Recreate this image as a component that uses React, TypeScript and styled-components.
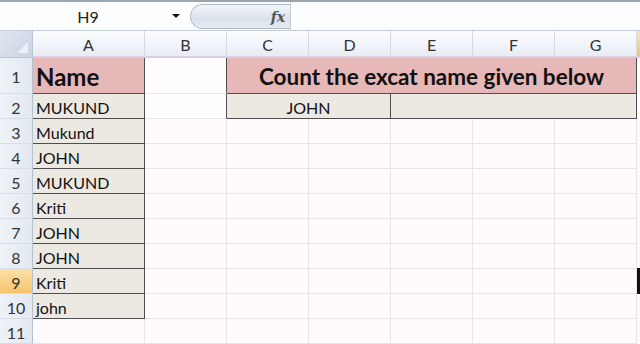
import * as React from 'react';
import styled, { createGlobalStyle, css } from 'styled-components';

const GlobalStyle = createGlobalStyle`
  html, body {
    margin: 0;
    padding: 0;
    background: #fffbfd;
    overflow: hidden;
  }
  body {
    font-family: Lato, "Open Sans", "Liberation Sans", sans-serif;
  }
`;

const Page = styled.div`
  width: 640px;
  height: 344px;
  display: flex;
  flex-direction: column;
  overflow: hidden;
`;

const FormulaBar = styled.div`
  height: 28px;
  display: flex;
  align-items: stretch;
  border-top: 2px solid #9ba5b0;
  border-bottom: 1px solid #c4ccd6;
  background: #fdfeff;
`;

const NameBox = styled.div`
  width: 188px;
  display: flex;
  align-items: center;
  font-size: 16px;
  color: #222;
  span {
    flex: 1;
    text-align: center;
    padding-left: 4px;
  }
`;

const DropArrow = styled.div`
  width: 0;
  height: 0;
  margin-right: 8px;
  border-left: 4px solid transparent;
  border-right: 4px solid transparent;
  border-top: 4px solid #111;
`;

const FxPill = styled.div`
  width: 94px;
  margin: 2px 0 1px 2px;
  border: 1px solid #aeb9c7;
  border-right: none;
  border-radius: 14px 0 0 14px;
  background: linear-gradient(#f3f6fa, #dbe2ec 60%, #e6ebf2);
  display: flex;
  align-items: center;
  justify-content: flex-end;
  padding-right: 5px;
  font-family: "DejaVu Serif", "Liberation Serif", serif;
  font-style: italic;
  font-weight: bold;
  font-size: 14px;
  color: #555;
`;

const FormulaInput = styled.div`
  flex: 1;
  border-left: 1px solid #c4ccd6;
  background: #fcfdff;
`;

const Sheet = styled.div`
  flex: 1;
  display: grid;
  grid-template-columns: 33px 112px repeat(6, 82px) 3px;
  grid-template-rows: 27px 36px repeat(10, 25px);
`;

const Corner = styled.div`
  background: linear-gradient(135deg, #dfe6ef, #c9d5e3);
  border-right: 1px solid #b6c4d4;
  border-bottom: 1px solid #b6c4d4;
  position: relative;
  &::after {
    content: '';
    position: absolute;
    right: 4px;
    bottom: 4px;
    width: 0;
    height: 0;
    border-left: 11px solid transparent;
    border-bottom: 11px solid #edf1f6;
  }
`;

const ColHead = styled.div<{ $sel?: boolean }>`
  background: linear-gradient(#fbfcfe, #f1f4f9 55%, #e7ebf3);
  border-right: 1px solid #d3dae4;
  border-bottom: 2px solid #dccfe0;
  display: flex;
  align-items: center;
  justify-content: center;
  padding-top: 2px;
  font-size: 16px;
  color: #333;
  ${p => p.$sel && css`
    background: linear-gradient(#fbe5b4, #f3c46a);
    border-right: none;
  `}
`;

const RowHead = styled.div<{ $sel?: boolean }>`
  background: linear-gradient(90deg, #eef2f7, #e3e9f1);
  border-right: 1px solid #b3c2d3;
  border-bottom: 1px solid #d6dde6;
  display: flex;
  align-items: center;
  justify-content: center;
  padding-top: 2px;
  font-size: 16px;
  color: #333;
  ${p => p.$sel && css`
    background: linear-gradient(#fbe0a6, #f5c56c);
  `}
`;

type CellProps = {
  $bg?: string;
  $boxed?: boolean;
  $darkRight?: boolean;
  $span?: number;
  $center?: boolean;
  $size?: number;
};

const Cell = styled.div<CellProps>`
  grid-column: span ${p => p.$span || 1};
  background: ${p => p.$bg || '#fffbfd'};
  border-right: 1px solid ${p => (p.$boxed || p.$darkRight ? '#4e4e4e' : '#e8e4e8')};
  border-bottom: 1px solid ${p => (p.$boxed ? '#4e4e4e' : '#e8e4e8')};
  display: flex;
  align-items: center;
  justify-content: ${p => (p.$center ? 'center' : 'flex-start')};
  padding: 2px 3px 0;
  font-size: ${p => (p.$size ? `${p.$size}px` : '16px')};
  font-weight: ${p => (p.$size ? 700 : 400)};
  color: #111;
  white-space: nowrap;
  overflow: hidden;
`;

const Edge = styled.div<{ $sel?: boolean }>`
  background: #fffbfd;
  ${p => p.$sel && css`
    border: 3px solid #111;
    border-right: none;
    margin-top: -1px;
  `}
`;

const PINK = '#e6b8b8';
const TAN = '#ece8e2';

const names = ['MUKUND', 'Mukund', 'JOHN', 'MUKUND', 'Kriti', 'JOHN', 'JOHN', 'Kriti', 'john'];
const cols = ['A', 'B', 'C', 'D', 'E', 'F', 'G'];

export default function App() {
  return (
    <Page>
      <GlobalStyle />
      <FormulaBar>
        <NameBox>
          <span>H9</span>
          <DropArrow />
        </NameBox>
        <FxPill>fx</FxPill>
        <FormulaInput />
      </FormulaBar>
      <Sheet>
        <Corner />
        {cols.map(c => <ColHead key={c}>{c}</ColHead>)}
        <ColHead $sel />

        <RowHead>1</RowHead>
        <Cell $bg={PINK} $boxed $size={24}>Name</Cell>
        <Cell $darkRight $bg="#fffdfe" />
        <Cell $bg={PINK} $boxed $size={22.5} $center $span={5}>Count the excat name given below</Cell>
        <Edge />

        <RowHead>2</RowHead>
        <Cell $bg={TAN} $boxed>{names[0]}</Cell>
        <Cell $darkRight $bg="#fffdfe" />
        <Cell $bg={TAN} $boxed $center $span={2}>JOHN</Cell>
        <Cell $bg={TAN} $boxed $span={3} />
        <Edge />

        {names.slice(1).map((n, i) => {
          const row = i + 3;
          return (
            <React.Fragment key={row}>
              <RowHead $sel={row === 9}>{row}</RowHead>
              <Cell $bg={TAN} $boxed>{n}</Cell>
              {[0, 1, 2, 3, 4, 5].map(k => <Cell key={k} />)}
              <Edge $sel={row === 9} />
            </React.Fragment>
          );
        })}

        <RowHead>11</RowHead>
        {[0, 1, 2, 3, 4, 5, 6].map(k => <Cell key={k} />)}
        <Edge />
      </Sheet>
    </Page>
  );
}
